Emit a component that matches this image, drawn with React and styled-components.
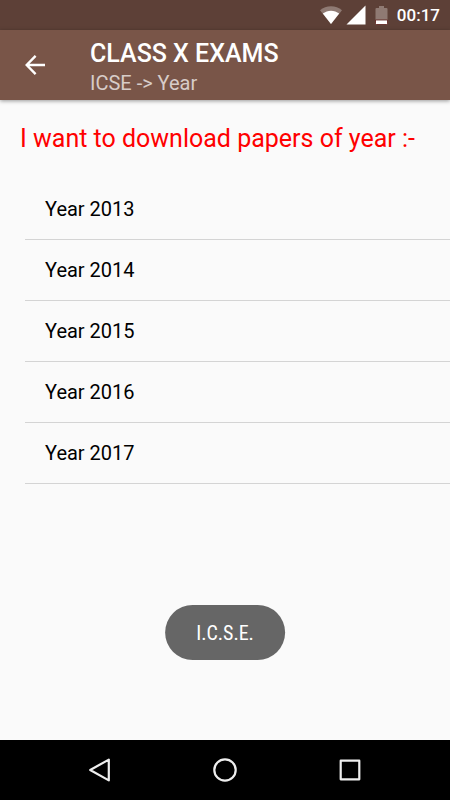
import React, {useState} from 'react';
import styled, {createGlobalStyle, css} from 'styled-components';

const years = ['Year 2013', 'Year 2014', 'Year 2015', 'Year 2016', 'Year 2017'];

const App = () => {
    const [toast, setToast] = useState('I.C.S.E.');

    return (
      <Screen>
        <GlobalStyle />

        <StatusBar>
          <svg width="22" height="18" viewBox="0 0 22 18" aria-hidden="true">
            <path d="M0 4.2C6-1.2 16-1.2 22 4.2L11 18Z" fill="#8f7a73" />
            <path d="M2.8 7.6C7.5 3.7 14.5 3.7 19.2 7.6L11 18Z" fill="#fff" />
          </svg>
          <svg width="20" height="20" viewBox="0 0 20 20" aria-hidden="true">
            <path d="M19.5 0.5V19.5H0.5Z" fill="#fff" />
          </svg>
          <Battery width="13" height="19" viewBox="0 0 13 19" aria-hidden="true">
            <path d="M4 0H9V2H11.5Q12.5 2 12.5 3V14H0.5V3Q0.5 2 1.5 2H4Z" fill="#8f7a73" />
            <path d="M0.5 14H12.5V17.5Q12.5 18.5 11.5 18.5H1.5Q0.5 18.5 0.5 17.5Z" fill="#fff" stroke="#5a1c18" strokeWidth="0.8" />
          </Battery>
          <Clock>00:17</Clock>
        </StatusBar>

        <AppBar>
          <BackButton type="button" aria-label="Back">
            <svg width="20" height="20" viewBox="0 0 20 20" fill="none" stroke="#fff" strokeWidth="2.4" aria-hidden="true">
              <path d="M20 10H2.2M10.6 0.9L1.7 10L10.6 19.1" />
            </svg>
          </BackButton>
          <Titles>
            <Title>CLASS X EXAMS</Title>
            <Subtitle>ICSE -&gt; Year</Subtitle>
          </Titles>
        </AppBar>

        <Content>
          <Heading>I want to download papers of year :-</Heading>
          <YearList>
            {years.map((year) => (
              <YearItem key={year}>
                <YearButton type="button" onClick={() => setToast(year)}>{year}</YearButton>
              </YearItem>
            ))}
          </YearList>
        </Content>

        <Toast role="status">{toast}</Toast>

        <NavBar>
          <NavButton type="button" aria-label="Back">
            <svg {...navIcon}><path d="M20.8 1.6V22.4L2.2 12Z" /></svg>
          </NavButton>
          <NavButton type="button" aria-label="Home">
            <svg {...navIcon}><circle cx="12" cy="12" r="10.7" /></svg>
          </NavButton>
          <NavButton type="button" aria-label="Recent apps">
            <svg {...navIcon}><rect x="2.7" y="2.7" width="18.6" height="18.6" /></svg>
          </NavButton>
        </NavBar>
      </Screen>
    );
}

const navIcon = {
    width: 24,
    height: 24,
    viewBox: '0 0 24 24',
    fill: 'none',
    stroke: '#eee',
    strokeWidth: 2.2,
    strokeLinejoin: 'round',
    'aria-hidden': true,
};

const GlobalStyle = createGlobalStyle`
  * {
    box-sizing: border-box;
  }
  body {
    margin: 0;
    background: #fafafa;
    font-family: Roboto, "Liberation Sans", sans-serif;
  }
  svg {
    display: block;
  }
`;

const buttonReset = css`
  padding: 0;
  border: 0;
  background: none;
  font-family: inherit;
  cursor: pointer;
`;

const Screen = styled.div`
  position: relative;
  display: flex;
  flex-direction: column;
  min-height: 100vh;
`;

const StatusBar = styled.div`
  display: flex;
  align-items: center;
  justify-content: flex-end;
  gap: 4px;
  height: 30px;
  padding-right: 10px;
  background: #5d4037;
`;

const Battery = styled.svg`
  margin: 0 5px;
`;

const Clock = styled.span`
  color: #fff;
  font-size: 17px;
  font-weight: 500;
  line-height: 32px;
`;

const AppBar = styled.header`
  display: flex;
  align-items: center;
  height: 70px;
  background: #795548;
  box-shadow: 0 1px 4px rgba(0, 0, 0, 0.4);
`;

const BackButton = styled.button`
  ${buttonReset}
  display: grid;
  place-items: center;
  width: 70px;
  height: 70px;
  margin-right: 20px;
`;

const Titles = styled.div`
  padding-top: 6px;
`;

const Title = styled.h1`
  margin: 0;
  color: #fff;
  font-size: 25px;
  font-weight: 500;
  line-height: 30px;
`;

const Subtitle = styled.p`
  margin: 0;
  color: #d7ccc8;
  font-size: 20px;
  font-weight: 400;
  line-height: 28px;
`;

const Content = styled.main`
  flex: 1;
  padding: 20px 0 20px 20px;
`;

const Heading = styled.h2`
  margin: 0 0 21px;
  color: #f00;
  font-size: 25px;
  font-weight: 400;
  line-height: 38px;
`;

const YearList = styled.ul`
  margin: 0 0 0 5px;
  padding: 0;
  list-style: none;
`;

const YearItem = styled.li`
  border-bottom: 1px solid #d4d4d4;
`;

const YearButton = styled.button`
  ${buttonReset}
  display: block;
  width: 100%;
  padding: 0 20px;
  color: #000;
  font-size: 20px;
  line-height: 60px;
  text-align: left;
`;

const Toast = styled.div`
  position: absolute;
  bottom: 140px;
  left: 50%;
  transform: translateX(-50%);
  padding: 1px 31px 0;
  border-radius: 28px;
  background: #666;
  color: #fff;
  font-family: "Roboto Condensed", Roboto, sans-serif;
  font-size: 20px;
  font-weight: 400;
  line-height: 54px;
  white-space: nowrap;
`;

const NavBar = styled.nav`
  display: grid;
  grid-template-columns: repeat(3, 1fr);
  height: 60px;
  padding: 0 37px;
  background: #000;
`;

const NavButton = styled.button`
  ${buttonReset}
  display: grid;
  place-items: center;
`;

export default App
